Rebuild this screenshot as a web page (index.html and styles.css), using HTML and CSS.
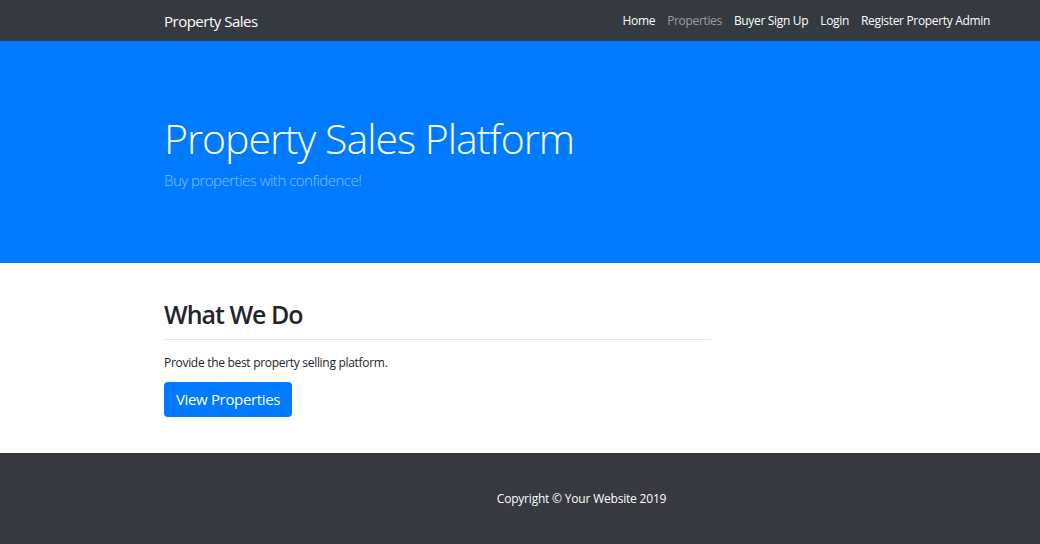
FILE: index.html
```html
<!DOCTYPE html>
<html lang="en">
<head>
<meta charset="utf-8">
<title>Property Sales</title>
<link rel="stylesheet" href="styles.css">
</head>
<body>
<nav class="navbar">
  <div class="container nav-inner">
    <a class="brand" href="#">Property Sales</a>
    <ul class="nav-links">
      <li><a class="nav-link" href="#">Home</a></li>
      <li><a class="nav-link muted" href="#">Properties</a></li>
      <li><a class="nav-link" href="#">Buyer Sign Up</a></li>
      <li><a class="nav-link" href="#">Login</a></li>
      <li><a class="nav-link" href="#">Register Property Admin</a></li>
    </ul>
  </div>
</nav>
<header class="hero">
  <div class="container">
    <h1 class="hero-title">Property Sales Platform</h1>
    <p class="lead">Buy properties with confidence!</p>
  </div>
</header>
<main class="section">
  <div class="container">
    <div class="col-8">
      <h2 class="section-title">What We Do</h2>
      <hr class="divider">
      <p class="text">Provide the best property selling platform.</p>
      <a class="btn" href="#">View Properties</a>
    </div>
  </div>
</main>
<footer class="footer">
  <div class="container">
    <p class="copyright">Copyright &copy; Your Website 2019</p>
  </div>
</footer>
</body>
</html>
```
FILE: styles.css
```css
* { box-sizing: border-box; }
html, body { margin: 0; padding: 0; }
body {
  font-family: "Open Sans", "Noto Sans", sans-serif;
  font-size: 12px;
  line-height: 1.5;
  color: #212529;
  background: #fff;
}
a { text-decoration: none; }
.container {
  width: 865px;
  margin-left: 149px;
  padding: 0 15px;
}
.navbar {
  background: #343a40;
  height: 41px;
}
.nav-inner {
  display: flex;
  align-items: center;
  height: 41px;
}
.brand {
  color: #fff;
  font-size: 15px;
  line-height: 22px;
  letter-spacing: -0.5px;
}
.nav-links {
  display: flex;
  list-style: none;
  margin: 0 0 0 auto;
  padding: 0;
  position: relative;
  left: -3px;
}
.nav-link {
  display: block;
  padding: 4px 6px;
  color: #fff;
  font-size: 12px;
  letter-spacing: -0.33px;
}
.nav-link.muted { color: rgba(255,255,255,.5); }
.hero {
  background: #007bff;
  padding: 36px 0 35px;
}
.hero-title {
  margin: 36px 0 6px;
  font-size: 41px;
  font-weight: 300;
  line-height: 50px;
  color: #fff;
  letter-spacing: -1px;
}
.lead {
  margin: 0 0 36px;
  font-size: 15px;
  font-weight: 300;
  line-height: 23px;
  color: rgba(255,255,255,.5);
  letter-spacing: -0.5px;
}
.section { padding: 36px 0; }
.col-8 { width: 547px; }
.section-title {
  margin: 0;
  font-size: 25px;
  font-weight: 600;
  line-height: 30px;
  letter-spacing: -1px;
}
.divider {
  margin: 10px 0 14px;
  border: 0;
  border-top: 1px solid rgba(0,0,0,.1);
}
.text {
  margin: 0 0 10px;
  font-size: 12px;
  line-height: 18px;
  letter-spacing: -0.3px;
}
.btn {
  display: inline-block;
  background: #007bff;
  color: #fff;
  font-size: 15px;
  line-height: 23px;
  padding: 6px 12px;
  border-radius: 4px;
  letter-spacing: -0.35px;
}
.footer {
  background: #343a40;
  padding: 37px 0 36px;
}
.copyright {
  margin: 0;
  text-align: center;
  color: #fff;
  font-size: 12px;
  line-height: 18px;
  letter-spacing: -0.2px;
}
```
